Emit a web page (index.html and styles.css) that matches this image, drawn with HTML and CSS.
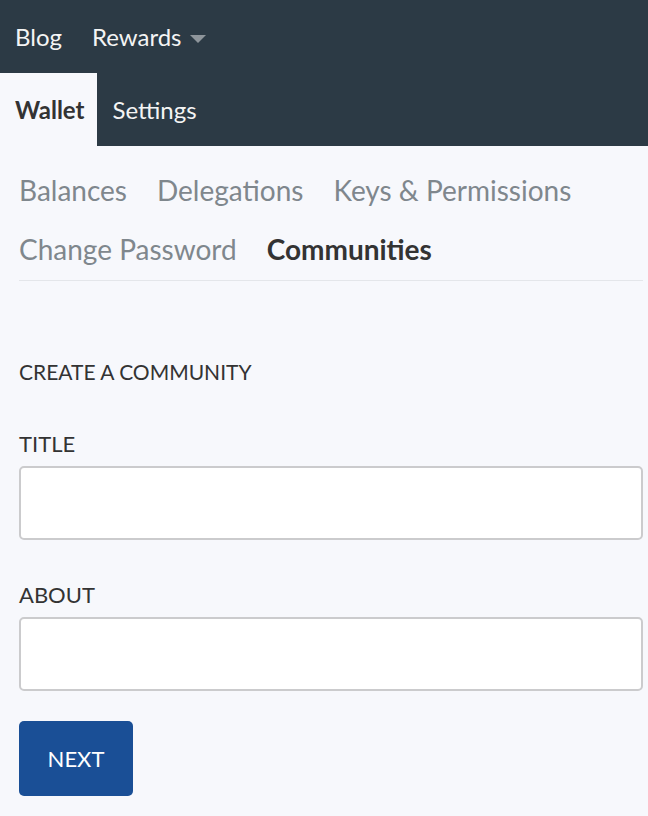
FILE: index.html
```html
<!DOCTYPE html>
<html>
<head>
<meta charset="utf-8">
<link rel="stylesheet" href="styles.css">
</head>
<body>
<header class="top">
  <nav class="top-row">
    <a class="top-link">Blog</a>
    <a class="top-link">Rewards <span class="caret"></span></a>
  </nav>
  <nav class="tab-row">
    <a class="tab active">Wallet</a>
    <a class="tab">Settings</a>
  </nav>
</header>
<main class="content">
  <nav class="subnav">
    <a class="sublink">Balances</a>
    <a class="sublink">Delegations</a>
    <a class="sublink">Keys &amp; Permissions</a>
    <a class="sublink">Change Password</a>
    <a class="sublink current">Communities</a>
  </nav>
  <form class="form">
    <h2 class="form-title">CREATE A COMMUNITY</h2>
    <label class="field">
      <span class="field-label">TITLE</span>
      <input class="field-input" type="text">
    </label>
    <label class="field">
      <span class="field-label">ABOUT</span>
      <input class="field-input" type="text">
    </label>
    <button class="btn" type="button">NEXT</button>
  </form>
</main>
</body>
</html>
```
FILE: styles.css
```css
* { box-sizing: border-box; }
html, body { margin: 0; padding: 0; }
body {
  background: #f7f8fc;
  font-family: Lato, "Open Sans", "Liberation Sans", sans-serif;
  color: #333;
  width: 648px;
  height: 816px;
  overflow: hidden;
}
.top { background: #2c3a45; }
.top-row {
  display: flex;
  align-items: center;
  height: 73px;
  padding-left: 15px;
  gap: 30px;
}
.top-link {
  color: #f4f4f4;
  font-size: 24px;
  display: flex;
  align-items: center;
}
.caret {
  display: inline-block;
  width: 0; height: 0;
  border-left: 8px solid transparent;
  border-right: 8px solid transparent;
  border-top: 8px solid #8e959b;
  margin-left: 8px;
  margin-top: 4px;
}
.tab-row {
  display: flex;
  height: 73px;
}
.tab {
  display: flex;
  align-items: center;
  padding: 0 14px 0 15px;
  font-size: 24px;
  color: #f4f4f4;
}
.tab.active {
  background: #f7f8fc;
  color: #333;
  font-weight: bold;
  padding-right: 13px;
}
.content { padding: 0 5px 0 19px; }
.subnav {
  display: flex;
  flex-wrap: wrap;
  column-gap: 30px;
  padding-top: 15px;
  padding-bottom: 1px;
  border-bottom: 1px solid #e4e6ea;
}
.sublink {
  font-size: 28px;
  line-height: 59px;
  color: #7f878d;
}
.sublink.current { color: #333; font-weight: bold; }
.form { display: flex; flex-direction: column; }
.form-title {
  margin: 76px 0 0;
  font-size: 21px;
  font-weight: normal;
  line-height: 30px;
  color: #333;
}
.field { display: flex; flex-direction: column; margin-top: 42px; }
.field + .field { margin-top: 40px; }
.field-label {
  font-size: 22px;
  line-height: 30px;
  margin-bottom: 7px;
}
.field-input {
  height: 74px;
  border: 2px solid #cbcbcd;
  border-radius: 5px;
  background: #fff;
  font-size: 22px;
  padding: 0 12px;
}
.btn {
  align-self: flex-start;
  margin-top: 30px;
  width: 114px;
  height: 75px;
  background: #1a4f96;
  color: #fff;
  border: none;
  border-radius: 5px;
  font-family: inherit;
  font-size: 22px;
}
```
